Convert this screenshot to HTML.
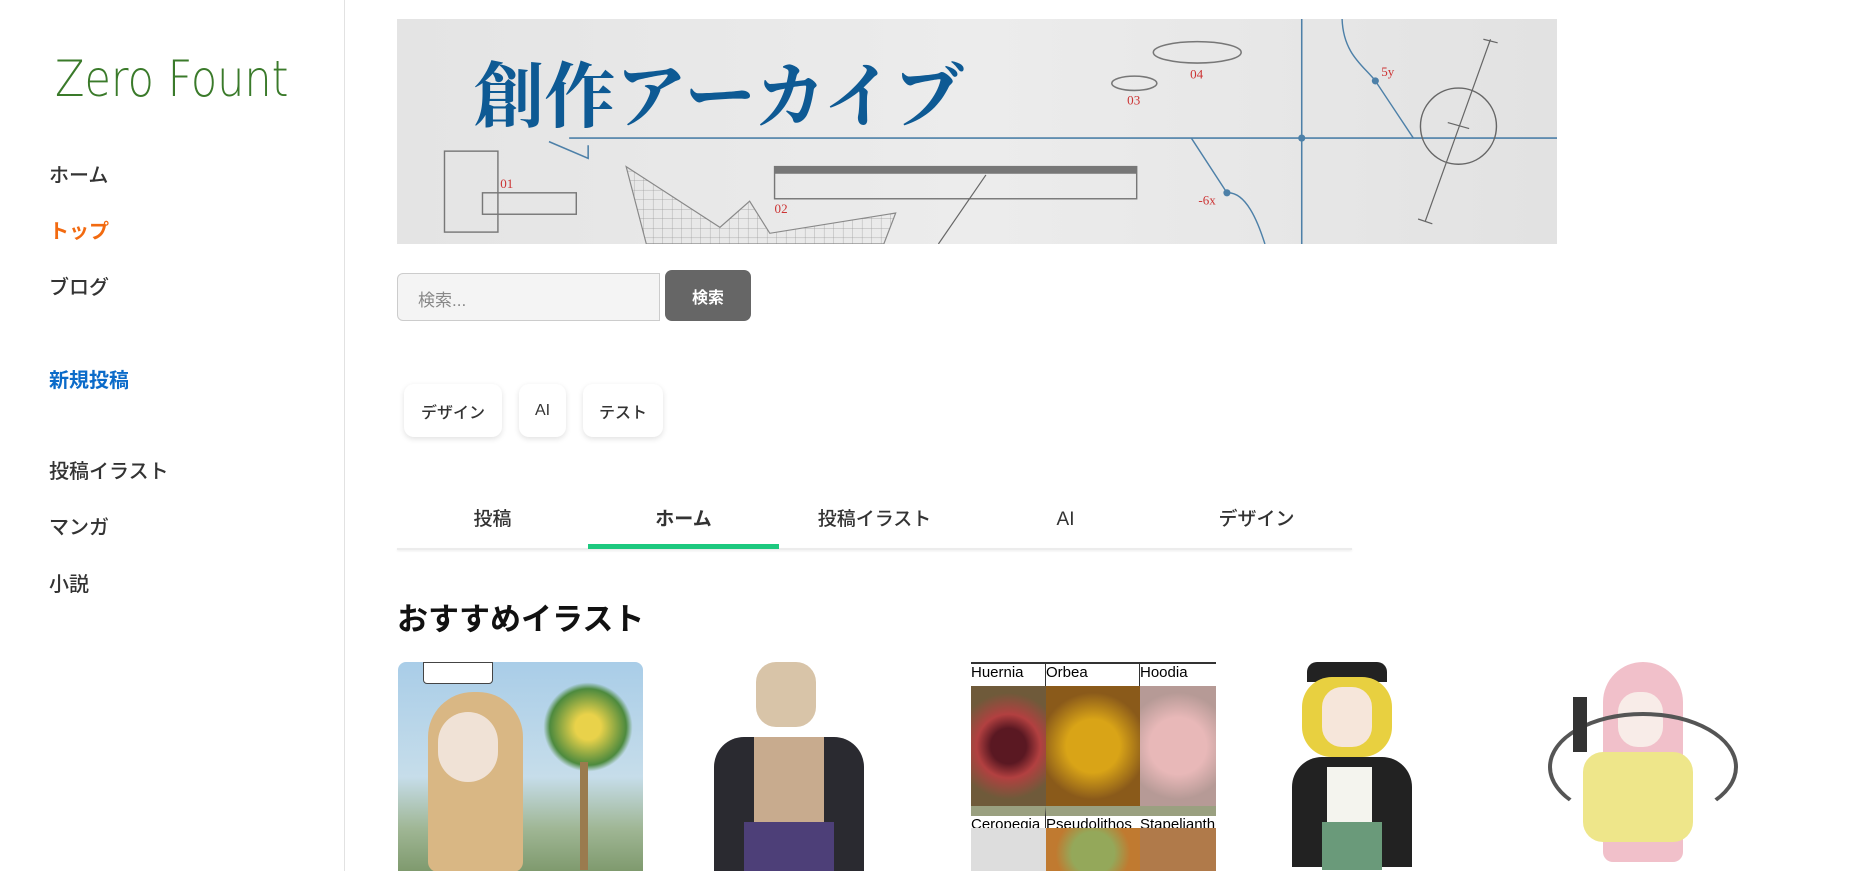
<!DOCTYPE html>
<html><head><meta charset="utf-8"><style>
*{margin:0;padding:0;box-sizing:border-box}
body{width:1863px;height:871px;overflow:hidden;background:#fff;font-family:"Liberation Sans","Noto Sans CJK JP",sans-serif;position:relative}
.side{position:absolute;left:0;top:0;width:345px;height:871px;border-right:1px solid #e2e2e2}
.logo{position:absolute;left:55px;top:50px;font-size:50px;color:#3a7a2a;font-family:"DejaVu Sans","Liberation Sans",sans-serif;font-weight:200;transform:scaleX(0.86);transform-origin:left;white-space:nowrap}
.nav{position:absolute;left:49px;font-size:20px;color:#333;font-weight:500}
.abs{position:absolute}
.tag{position:absolute;top:384px;height:53px;background:#fff;border-radius:10px;box-shadow:0 2px 6px rgba(0,0,0,.12);font-size:16px;color:#333;display:flex;align-items:center;justify-content:center;font-weight:500}
.tab{position:absolute;top:505px;height:30px;line-height:30px;width:191px;text-align:center;font-size:19px;color:#333;font-weight:500}
.img{position:absolute;top:662px;width:245px;height:209px;overflow:hidden}
</style></head><body>
<div class="side">
<div class="logo">Zero Fount</div>
<div class="nav" style="top:159px">ホーム</div>
<div class="nav" style="top:215px;color:#f26a10;font-weight:bold">トップ</div>
<div class="nav" style="top:271px">ブログ</div>
<div class="nav" style="top:364px;color:#0b6bc9;font-weight:bold">新規投稿</div>
<div class="nav" style="top:455px">投稿イラスト</div>
<div class="nav" style="top:511px">マンガ</div>
<div class="nav" style="top:568px">小説</div>
</div>

<svg class="abs" style="left:397px;top:19px" width="1160" height="225" viewBox="0 0 977 189" preserveAspectRatio="none">
<defs>
<linearGradient id="bg" x1="0" x2="1"><stop offset="0" stop-color="#e4e4e4"/><stop offset=".5" stop-color="#ececec"/><stop offset="1" stop-color="#e2e2e2"/></linearGradient>
<pattern id="grid" width="8" height="8" patternUnits="userSpaceOnUse"><path d="M8 0V8M0 8H8" stroke="#999" stroke-width=".6" fill="none"/></pattern>
</defs>
<rect width="977" height="189" fill="url(#bg)"/>
<text x="64" y="86" font-family="Noto Serif CJK SC,Noto Serif CJK JP,serif" font-size="60" font-weight="bold" fill="#0e5a94">創作アーカイブ</text>
<line x1="145" y1="100" x2="977" y2="100" stroke="#4d80a8" stroke-width="1.3"/>
<line x1="762" y1="0" x2="762" y2="189" stroke="#4d80a8" stroke-width="1.3"/>
<circle cx="762" cy="100" r="3" fill="#4d80a8"/>
<path d="M128 103L161 117V106" stroke="#4d80a8" stroke-width="1.3" fill="none"/>
<rect x="40" y="111" width="45" height="68" fill="none" stroke="#777" stroke-width="1.2"/>
<rect x="72" y="146" width="79" height="18" fill="none" stroke="#777" stroke-width="1.2"/>
<text x="87" y="142" font-family="Liberation Serif,serif" font-size="11" fill="#c33">01</text>
<polygon points="193,124 272,175 297,153 314,180 420,163 410,189 210,189" fill="url(#grid)" stroke="#888" stroke-width="1"/>
<rect x="318" y="124" width="305" height="27" fill="none" stroke="#777" stroke-width="1.2"/>
<rect x="318" y="124" width="305" height="6" fill="#777"/>
<text x="318" y="163" font-family="Liberation Serif,serif" font-size="11" fill="#c33">02</text>
<line x1="496" y1="131" x2="456" y2="189" stroke="#666" stroke-width="1"/>
<ellipse cx="621" cy="54" rx="19" ry="6" fill="none" stroke="#777" stroke-width="1.3"/>
<text x="615" y="72" font-family="Liberation Serif,serif" font-size="11" fill="#c33">03</text>
<ellipse cx="674" cy="28" rx="37" ry="9" fill="none" stroke="#777" stroke-width="1.3"/>
<text x="668" y="50" font-family="Liberation Serif,serif" font-size="11" fill="#c33">04</text>
<path d="M796 0C797 30 815 40 824 52L856 100" stroke="#4d80a8" stroke-width="1.2" fill="none"/>
<circle cx="824" cy="52" r="3" fill="#4d80a8"/>
<text x="829" y="48" font-family="Liberation Serif,serif" font-size="11" fill="#c33">5y</text>
<path d="M669 100L699 146C715 145 725 170 731 189" stroke="#4d80a8" stroke-width="1.2" fill="none"/>
<circle cx="699" cy="146" r="3" fill="#4d80a8"/>
<text x="675" y="156" font-family="Liberation Serif,serif" font-size="11" fill="#c33">-6x</text>
<circle cx="894" cy="90" r="32" fill="none" stroke="#666" stroke-width="1.2"/>
<line x1="921" y1="17" x2="866" y2="170" stroke="#666" stroke-width="1"/>
<line x1="915" y1="17" x2="927" y2="20" stroke="#666"/><line x1="860" y1="168" x2="872" y2="172" stroke="#666"/>
<line x1="885" y1="87" x2="903" y2="92" stroke="#666"/>
</svg>

<div class="abs" style="left:397px;top:273px;width:263px;height:48px;background:#f4f4f4;border:1px solid #ccc;border-radius:6px 0 0 6px;font-size:17px;color:#888;padding:12px 0 0 20px">検索...</div>
<div class="abs" style="left:665px;top:270px;width:86px;height:51px;background:#666;border-radius:7px;color:#fff;font-size:16px;font-weight:bold;display:flex;align-items:center;justify-content:center">検索</div>

<div class="tag" style="left:404px;width:98px">デザイン</div>
<div class="tag" style="left:519px;width:47px">AI</div>
<div class="tag" style="left:583px;width:80px">テスト</div>

<div class="abs" style="left:397px;top:548px;width:955px;height:2px;background:#ececec;box-shadow:0 1px 2px rgba(0,0,0,.08)"></div>
<div class="tab" style="left:397px">投稿</div>
<div class="tab" style="left:588px;font-weight:bold">ホーム</div>
<div class="tab" style="left:779px">投稿イラスト</div>
<div class="tab" style="left:970px">AI</div>
<div class="tab" style="left:1161px">デザイン</div>
<div class="abs" style="left:588px;top:544px;width:191px;height:5px;background:#1dc97f"></div>

<div class="abs" style="left:397px;top:594px;font-size:31px;font-weight:bold;color:#111">おすすめイラスト</div>

<div class="img" style="left:398px;border-radius:8px 8px 0 0;background:linear-gradient(180deg,#a9cde8 0%,#c6ddea 55%,#9fb694 80%,#7f9a6e 100%)">
 <div class="abs" style="left:25px;top:0;width:70px;height:22px;background:#fff;border:1px solid #444;border-radius:0 0 4px 4px"></div>
 <div class="abs" style="left:30px;top:30px;width:95px;height:180px;background:#d9b784;border-radius:45px 45px 10px 10px"></div>
 <div class="abs" style="left:40px;top:50px;width:60px;height:70px;background:#f0e2d6;border-radius:30px"></div>
 <div class="abs" style="left:145px;top:20px;width:90px;height:90px;background:radial-gradient(circle,#e9d24a 20%,#4d8a3e 60%,transparent 70%)"></div>
 <div class="abs" style="left:182px;top:100px;width:8px;height:108px;background:#9a7b4e"></div>
</div>
<div class="img" style="left:684px">
 <div class="abs" style="left:72px;top:0;width:60px;height:65px;background:#d8c4a8;border-radius:20px"></div>
 <div class="abs" style="left:30px;top:75px;width:150px;height:140px;background:#2a2a30;border-radius:30px 30px 0 0"></div>
 <div class="abs" style="left:70px;top:75px;width:70px;height:100px;background:#c8ab8e"></div>
 <div class="abs" style="left:60px;top:160px;width:90px;height:50px;background:#4d3f78"></div>
</div>
<div class="img" style="left:971px;display:grid;grid-template-columns:75px 94px 76px;grid-template-rows:22px 120px 22px 50px;border-top:2px solid #333">
 <div style="font-size:15px;border-right:1px solid #333">Huernia</div><div style="font-size:15px;border-right:1px solid #333">Orbea</div><div style="font-size:15px">Hoodia</div>
 <div style="background:radial-gradient(circle,#5a1822 25%,#b24040 45%,#6f5a3a 75%)"></div><div style="background:radial-gradient(circle,#d9a417 35%,#8a5a1a 70%)"></div><div style="background:radial-gradient(circle,#e8b8b8 40%,#b69a96 75%)"></div>
 <div style="font-size:15px;border-top:10px solid #9aa080;border-right:1px solid #333">Ceropegia</div><div style="font-size:15px;border-top:10px solid #9aa080">Pseudolithos</div><div style="font-size:15px;border-top:10px solid #9aa080">Stapelianthus</div>
 <div style="background:#ddd"></div><div style="background:radial-gradient(circle,#94a85a 40%,#c07a30 70%)"></div><div style="background:#b07a4a"></div>
</div>
<div class="img" style="left:1257px">
 <div class="abs" style="left:50px;top:0;width:80px;height:20px;background:#222;border-radius:10px 10px 0 0"></div>
 <div class="abs" style="left:45px;top:15px;width:90px;height:80px;background:#e8d040;border-radius:30px"></div>
 <div class="abs" style="left:65px;top:25px;width:50px;height:60px;background:#f6e6da;border-radius:20px"></div>
 <div class="abs" style="left:35px;top:95px;width:120px;height:110px;background:#222;border-radius:30px 30px 0 0"></div>
 <div class="abs" style="left:70px;top:105px;width:45px;height:55px;background:#f4f4ee"></div>
 <div class="abs" style="left:65px;top:160px;width:60px;height:48px;background:#6a9a7a"></div>
</div>
<div class="img" style="left:1543px">
 <div class="abs" style="left:60px;top:0;width:80px;height:200px;background:#f1c0ca;border-radius:40px 40px 10px 10px"></div>
 <div class="abs" style="left:75px;top:30px;width:45px;height:55px;background:#f8ece8;border-radius:20px"></div>
 <div class="abs" style="left:40px;top:90px;width:110px;height:90px;background:#eee68a;border-radius:20px"></div>
 <div class="abs" style="left:5px;top:50px;width:190px;height:110px;border:4px solid #444;border-radius:50%;border-color:#555 #555 transparent #555"></div>
 <div class="abs" style="left:30px;top:35px;width:14px;height:55px;background:#333"></div>
</div>
</body></html>
